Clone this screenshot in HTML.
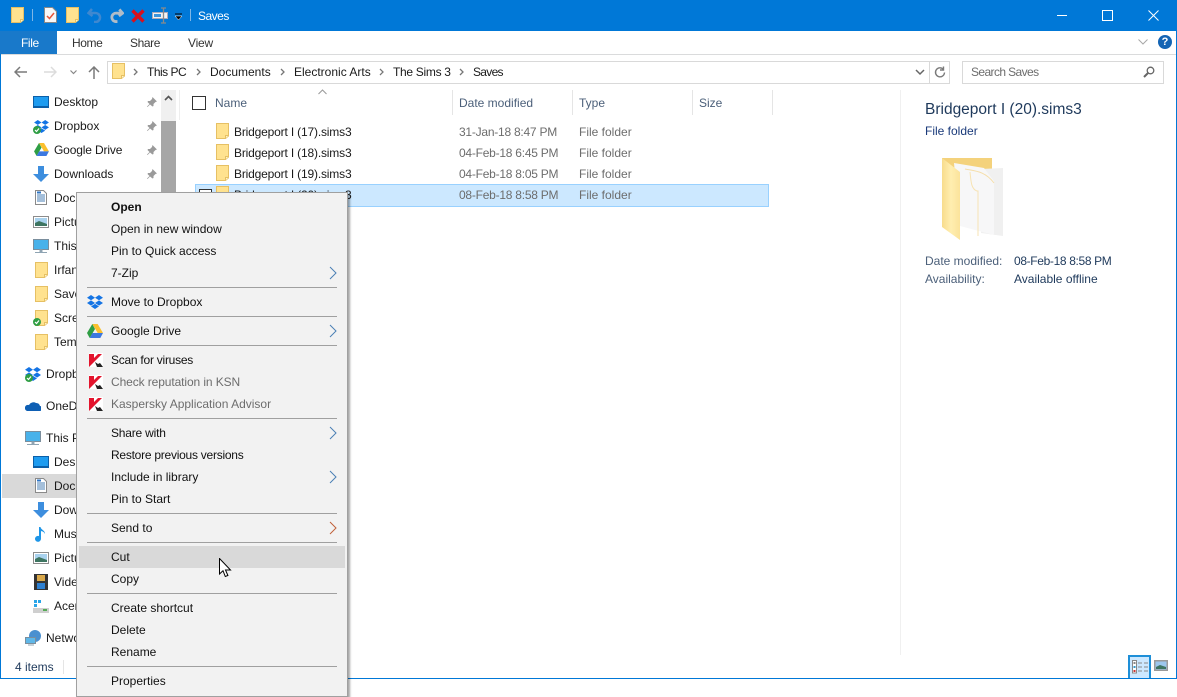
<!DOCTYPE html>
<html><head><meta charset="utf-8"><style>
html,body{margin:0;padding:0;background:#fff}
#w{position:relative;width:1177px;height:697px;overflow:hidden;background:#fff;font:12px/16px "Liberation Sans",sans-serif;color:#1a1a1a}
#w div,#w svg{position:absolute}
.t{white-space:nowrap;height:16px}
.m{color:#111;left:111px}
.g{color:#6d6d6d}
.h{color:#4c607a}
.s{left:87px;width:250px;height:1px;background:#a0a0a0}
.l{width:1px;background:#e5e5e5}
.n{left:54px}.n2{left:46px}
.fn{letter-spacing:-.17px}
.dt{letter-spacing:-.24px}
.tb{letter-spacing:-.4px}
</style></head><body><div id="w">
<svg width="0" height="0" style="left:0;top:0"><defs>
<symbol id="f" viewBox="0 0 13 16"><path d="M.5.500h12v12.500l-3 2.500H.500z" fill="#ffe28f" stroke="#e6c064"/><path d="M9.500 15.500v-3h3" fill="#fff4c8" stroke="#e6c064"/></symbol>
<symbol id="db" viewBox="0 0 16 14"><path d="M4 0 0 2.700l4 2.600L8 2.700zM12 0 8 2.700l4 2.600 4-2.600zM0 8l4 2.600L8 8 4 5.400zM16 8l-4 2.600L8 8l4-2.600zM4 11.400 8 14l4-2.600L8 8.900z" fill="#1474e4"/></symbol>
<symbol id="gd" viewBox="0 0 16 14"><path d="M5.300 0h5.400L16 9h-5.300z" fill="#fbc02d"/><path d="M5.300 0 0 9l2.700 5L8 5z" fill="#2f9e44"/><path d="M2.700 14h10.600L16 9H5.400z" fill="#3c78e0"/></symbol>
<symbol id="ok" viewBox="0 0 8 8"><circle cx="4" cy="4" r="4" fill="#2f9e44"/><path d="M2 4l1.500 1.500L6 2.500" stroke="#fff" fill="none" stroke-width="1.200"/></symbol>
<symbol id="dl" viewBox="0 0 16 16"><path d="M5 0h6v8h5l-8 8-8-8h5z" fill="#3d8ede"/></symbol>
<symbol id="doc" viewBox="0 0 12 15"><path d="M.5.500h8l3 3v11H.500z" fill="#fff" stroke="#8a8a8a"/><path d="M2 5h8M2 7h8M2 9h8M2 11h8" stroke="#4a7fb5"/><path d="M2 2.500h4" stroke="#2e75c5" stroke-width="2"/></symbol>
<symbol id="pic" viewBox="0 0 16 12"><rect x=".5" y=".5" width="15" height="11" fill="#fff" stroke="#8c8c8c"/><rect x="2" y="2" width="12" height="8" fill="#a9d2ee"/><path d="M2 7l4-2 8 3v2H2z" fill="#3e7561"/></symbol>
<symbol id="pc" viewBox="0 0 16 15"><rect x=".5" y=".5" width="15" height="10" fill="#49b2ea" stroke="#7a8e9d"/><path d="M7 11h2v2H7zM2 13.500h12" stroke="#8fa4b3" fill="#8fa4b3"/></symbol>
<symbol id="dt" viewBox="0 0 16 12"><rect x=".5" y=".5" width="15" height="11" fill="#1e9cf0" stroke="#0b5fa8"/><path d="M1 10.500h14" stroke="#0b5fa8"/></symbol>
<symbol id="pin" viewBox="0 0 10 10"><path d="M5.500 0l4.500 4.500-1.500.5-2 2 0 2-1 .5L3 7.500.5 10 0 9.500 2.500 7 .5 5l.5-1h2l2-2z" fill="#9a9a9a"/></symbol>
<symbol id="k" viewBox="0 0 14 14"><rect width="14" height="14" fill="#fff"/><path d="M0 1h5v4l4-4h4L7 7 0 14z" fill="#e3142d"/><path d="M6 9l3 2 2-1 3 4H8z" fill="#222"/></symbol>
<symbol id="arr" viewBox="0 0 8 14"><path d="M1 1l6 6-6 6" fill="none" stroke="#4a7fb5" stroke-width="1"/></symbol>
<symbol id="ch" viewBox="0 0 5 8"><path d="M1 1l3 3-3 3" fill="none" stroke="#777" stroke-width="1.300"/></symbol>
</defs></svg>

<!-- title bar -->
<div style="left:0;top:0;width:1177px;height:31px;background:#0078d7"></div>
<div style="left:0;top:0;width:1px;height:679px;background:#0078d7"></div>
<div style="left:1176px;top:0;width:1px;height:679px;background:#0078d7"></div>
<div style="left:0;top:678px;width:1177px;height:1px;background:#0078d7"></div>
<svg style="left:11px;top:7px" width="13" height="16"><use href="#f"/></svg>
<div style="left:32px;top:9px;width:1px;height:12px;background:#7fb6e6"></div>
<svg style="left:44px;top:7px" width="13" height="16" viewBox="0 0 13 16"><path d="M.5.500h8l4 4v11H.500z" fill="#f8f8f8" stroke="#8a8a8a"/><path d="M3 9l2.500 2.500L10 6" fill="none" stroke="#e8553a" stroke-width="1.500"/></svg>
<svg style="left:66px;top:7px" width="13" height="16"><use href="#f"/></svg>
<svg style="left:87px;top:8px" width="15" height="15" viewBox="0 0 15 15"><path d="M5 1 1.500 5 5.500 8M2 5h6a4.500 4.500 0 0 1 1 9H7" fill="none" stroke="#3f88cf" stroke-width="2.500"/></svg>
<svg style="left:110px;top:8px" width="14" height="15" viewBox="0 0 15 15"><path d="M10 1l3.500 4L9.500 8M13 5H7a4.500 4.500 0 0 0-1 9h2" fill="none" stroke="#b0bcc8" stroke-width="3"/></svg>
<svg style="left:131px;top:9px" width="14" height="14" viewBox="0 0 14 14"><path d="M1.500 1.500l11 11M12.500 1.500l-11 11" stroke="#d8101e" stroke-width="3.400"/></svg>
<svg style="left:152px;top:7px" width="17" height="17" viewBox="0 0 17 17"><rect x=".5" y="5.500" width="15" height="6" fill="#f2f2f2" stroke="#aab"/><rect x="2" y="7" width="7" height="3" fill="#3c94dc"/><path d="M11.500 1v15M9 1h5M9 16h5" stroke="#8a8a8a" stroke-width="1.300" fill="none"/></svg>
<svg style="left:174px;top:13px" width="9" height="9" viewBox="0 0 9 9"><path d="M1 1h7" stroke="#000"/><path d="M1 3h7L4.500 7z" fill="#000" stroke="#fff" stroke-width=".5"/></svg>
<div style="left:190px;top:9px;width:1px;height:12px;background:#7fb6e6"></div>
<div class="t" style="left:198px;top:8px;color:#fff;letter-spacing:-.5px">Saves</div>
<div style="left:1057px;top:15px;width:10px;height:1px;background:#fff"></div>
<div style="left:1102px;top:10px;width:9px;height:9px;border:1px solid #fff"></div>
<svg style="left:1148px;top:10px" width="11" height="11"><path d="M.5.500l10 10M10.500.500l-10 10" stroke="#fff"/></svg>

<!-- ribbon -->
<div style="left:1px;top:54px;width:1175px;height:1px;background:#dadbdc"></div>
<div style="left:0;top:31px;width:57px;height:23px;background:#1979ca"></div>
<div class="t tb" style="left:21px;top:35px;color:#fff;width:30px">File</div>
<div class="t tb" style="left:72px;top:35px;color:#333">Home</div>
<div class="t tb" style="left:130px;top:35px;color:#333">Share</div>
<div class="t" style="left:188px;top:35px;color:#333;letter-spacing:-.2px">View</div>
<svg style="left:1138px;top:39px" width="10" height="6"><path d="M.5.500l4.500 4.500 4.500-4.500" fill="none" stroke="#a8a8a8"/></svg>
<div style="left:1158px;top:35px;width:14px;height:14px;border-radius:50%;background:#1464b4;color:#fff;font:bold 11px/14px 'Liberation Sans',sans-serif;text-align:center">?</div>

<!-- nav buttons -->
<svg style="left:14px;top:66px" width="13" height="12" viewBox="0 0 13 12"><path d="M6 1 1 6l5 5M1 6h12" fill="none" stroke="#7a7a7a" stroke-width="1.500"/></svg>
<svg style="left:44px;top:66px" width="13" height="12" viewBox="0 0 13 12"><path d="M7 1l5 5-5 5M12 6H0" fill="none" stroke="#dcdcdc" stroke-width="1.500"/></svg>
<svg style="left:70px;top:70px" width="7" height="5"><path d="M.5.500l3 3 3-3" fill="none" stroke="#888" stroke-width="1.200"/></svg>
<svg style="left:88px;top:66px" width="12" height="13" viewBox="0 0 12 13"><path d="M1 6l5-5 5 5M6 1v12" fill="none" stroke="#7a7a7a" stroke-width="1.500"/></svg>

<!-- address -->
<div style="left:107px;top:61px;width:841px;height:21px;border:1px solid #d9d9d9"></div>
<div style="left:929px;top:62px;width:1px;height:21px;background:#d9d9d9"></div>
<svg style="left:112px;top:63px" width="13" height="16"><use href="#f"/></svg>
<svg style="left:133px;top:68px" width="5" height="8"><use href="#ch"/></svg><div class="t" style="left:147px;top:64px;letter-spacing:-.5px">This PC</div>
<svg style="left:196px;top:68px" width="5" height="8"><use href="#ch"/></svg><div class="t" style="left:210px;top:64px">Documents</div>
<svg style="left:280px;top:68px" width="5" height="8"><use href="#ch"/></svg><div class="t" style="left:294px;top:64px">Electronic Arts</div>
<svg style="left:379px;top:68px" width="5" height="8"><use href="#ch"/></svg><div class="t" style="left:393px;top:64px;letter-spacing:-.3px">The Sims 3</div>
<svg style="left:459px;top:68px" width="5" height="8"><use href="#ch"/></svg><div class="t" style="left:473px;top:64px;letter-spacing:-.7px">Saves</div>
<svg style="left:915px;top:69px" width="10" height="7"><path d="M1 1l4 4 4-4" fill="none" stroke="#666" stroke-width="1.500"/></svg>
<svg style="left:933px;top:66px" width="13" height="13" viewBox="0 0 13 13"><path d="M10.500 3.500a4.500 4.500 0 1 0 1 3M10.500 .5v3.500H7" fill="none" stroke="#7a7a7a" stroke-width="1.400"/></svg>
<div style="left:962px;top:61px;width:200px;height:21px;border:1px solid #d9d9d9"></div>
<div class="t g" style="left:971px;top:64px;letter-spacing:-.6px">Search Saves</div>
<svg style="left:1143px;top:66px" width="12" height="12" viewBox="0 0 12 12"><circle cx="7.500" cy="4.500" r="3.300" fill="none" stroke="#666" stroke-width="1.300"/><path d="M5 7l-4 4" stroke="#666" stroke-width="2"/></svg>

<!-- nav pane -->
<div style="left:161px;top:90px;width:15px;height:120px;background:#f0f0f0"></div>
<div style="left:161px;top:121px;width:15px;height:90px;background:#a6a6a6"></div>
<svg style="left:164px;top:95px" width="9" height="6"><path d="M1 5l3.500-3.500L8 5" fill="none" stroke="#555" stroke-width="1.600"/></svg>
<div style="left:179px;top:90px;width:1px;height:30px;background:#eee"></div>
<svg style="left:33px;top:96px" width="16" height="12"><use href="#dt"/></svg><div class="t n" style="top:94px">Desktop</div>
<svg style="left:34px;top:120px" width="15" height="13"><use href="#db"/></svg><svg style="left:33px;top:126px" width="8" height="8"><use href="#ok"/></svg><div class="t n" style="top:118px">Dropbox</div>
<svg style="left:34px;top:143px" width="15" height="13"><use href="#gd"/></svg><div class="t n" style="top:142px;letter-spacing:-.15px">Google Drive</div>
<svg style="left:33px;top:166px" width="16" height="16"><use href="#dl"/></svg><div class="t n" style="top:166px">Downloads</div>
<svg style="left:147px;top:97px" width="10" height="10"><use href="#pin"/></svg>
<svg style="left:147px;top:121px" width="10" height="10"><use href="#pin"/></svg>
<svg style="left:147px;top:145px" width="10" height="10"><use href="#pin"/></svg>
<svg style="left:147px;top:169px" width="10" height="10"><use href="#pin"/></svg>
<svg style="left:35px;top:190px" width="12" height="15"><use href="#doc"/></svg><div class="t n" style="top:190px">Documents</div>
<svg style="left:33px;top:216px" width="16" height="12"><use href="#pic"/></svg><div class="t n" style="top:214px">Pictures</div>
<svg style="left:33px;top:239px" width="16" height="15"><use href="#pc"/></svg><div class="t n" style="top:238px">This PC</div>
<svg style="left:35px;top:262px" width="13" height="16"><use href="#f"/></svg><div class="t n" style="top:262px">Irfan</div>
<svg style="left:35px;top:286px" width="13" height="16"><use href="#f"/></svg><div class="t n" style="top:286px">Saves</div>
<svg style="left:35px;top:310px" width="13" height="16"><use href="#f"/></svg><svg style="left:33px;top:318px" width="8" height="8"><use href="#ok"/></svg><div class="t n" style="top:310px">Screenshots</div>
<svg style="left:35px;top:334px" width="13" height="16"><use href="#f"/></svg><div class="t n" style="top:334px">Temp</div>
<svg style="left:25px;top:367px" width="16" height="14"><use href="#db"/></svg><svg style="left:25px;top:374px" width="8" height="8"><use href="#ok"/></svg><div class="t n2" style="top:366px">Dropbox</div>
<svg style="left:25px;top:401px" width="16" height="10" viewBox="0 0 16 10"><path d="M2 10h13a2.500 2.500 0 0 0 0-5 4 4 0 0 0-4-3A5 5 0 0 0 4 4a3 3 0 0 0-2 6z" fill="#0e5fb4"/></svg><div class="t n2" style="top:398px">OneDrive</div>
<svg style="left:25px;top:431px" width="16" height="15"><use href="#pc"/></svg><div class="t n2" style="top:430px">This PC</div>
<svg style="left:33px;top:456px" width="16" height="12"><use href="#dt"/></svg><div class="t n" style="top:454px">Desktop</div>
<div style="left:2px;top:474px;width:74px;height:24px;background:#d9d9d9"></div>
<svg style="left:35px;top:478px" width="12" height="15"><use href="#doc"/></svg><div class="t n" style="top:478px">Documents</div>
<svg style="left:33px;top:502px" width="16" height="16"><use href="#dl"/></svg><div class="t n" style="top:502px">Downloads</div>
<svg style="left:35px;top:526px" width="12" height="16" viewBox="0 0 12 16"><path d="M4 1h1.500c.5 3 4.500 3 4.500 7-1-2-2-2.500-4-3v8a3 3 0 1 1-2-3z" fill="#1e96e8"/></svg><div class="t n" style="top:526px">Music</div>
<svg style="left:33px;top:552px" width="16" height="12"><use href="#pic"/></svg><div class="t n" style="top:550px">Pictures</div>
<svg style="left:34px;top:574px" width="14" height="16" viewBox="0 0 14 16"><rect width="14" height="16" fill="#333"/><rect x="3" y="1" width="8" height="6" fill="#d9a84a"/><rect x="3" y="9" width="8" height="6" fill="#2d7fd0"/></svg><div class="t n" style="top:574px">Videos</div>
<svg style="left:33px;top:600px" width="16" height="13" viewBox="0 0 16 13"><rect x="1" y="0" width="3" height="3" fill="#2ba5e8"/><rect x="5" y="0" width="3" height="3" fill="#2ba5e8"/><rect x="1" y="4" width="3" height="3" fill="#2ba5e8"/><rect x="0" y="8" width="16" height="5" fill="#cfcfcf"/><rect x="10" y="9" width="4" height="2" fill="#5a5"/></svg><div class="t n" style="top:598px">Acer</div>
<svg style="left:25px;top:630px" width="16" height="16" viewBox="0 0 16 16"><circle cx="10" cy="6" r="6" fill="#4a90d0"/><rect x=".5" y="7.500" width="10" height="6" fill="#5fb7e8" stroke="#7a8e9d"/><path d="M3 15h6" stroke="#8fa4b3"/></svg><div class="t n2" style="top:630px">Network</div>

<!-- list header -->
<div style="left:192px;top:96px;width:12px;height:12px;border:1px solid #333"></div>
<svg style="left:318px;top:89px" width="9" height="6"><path d="M.5 5 4.500 1l4 4" fill="none" stroke="#999"/></svg>
<div class="t h" style="left:215px;top:95px">Name</div>
<div class="t h" style="left:459px;top:95px">Date modified</div>
<div class="t h" style="left:579px;top:95px">Type</div>
<div class="t h" style="left:699px;top:95px">Size</div>
<div class="l" style="left:452px;top:90px;height:25px"></div>
<div class="l" style="left:572px;top:90px;height:25px"></div>
<div class="l" style="left:692px;top:90px;height:25px"></div>
<div class="l" style="left:772px;top:90px;height:25px"></div>

<!-- rows -->
<svg style="left:216px;top:123px" width="13" height="16"><use href="#f"/></svg><div class="t fn" style="left:234px;top:124px">Bridgeport I (17).sims3</div><div class="t g dt" style="left:459px;top:124px">31-Jan-18 8:47 PM</div><div class="t g" style="left:579px;top:124px">File folder</div>
<svg style="left:216px;top:144px" width="13" height="16"><use href="#f"/></svg><div class="t fn" style="left:234px;top:145px">Bridgeport I (18).sims3</div><div class="t g dt" style="left:459px;top:145px">04-Feb-18 6:45 PM</div><div class="t g" style="left:579px;top:145px">File folder</div>
<svg style="left:216px;top:165px" width="13" height="16"><use href="#f"/></svg><div class="t fn" style="left:234px;top:166px">Bridgeport I (19).sims3</div><div class="t g dt" style="left:459px;top:166px">04-Feb-18 8:05 PM</div><div class="t g" style="left:579px;top:166px">File folder</div>
<div style="left:195px;top:184px;width:572px;height:21px;background:#cce8ff;border:1px solid #99d1ff"></div>
<div style="left:199px;top:189px;width:11px;height:11px;border:1px solid #333;background:#fff"></div>
<svg style="left:216px;top:186px" width="13" height="16"><use href="#f"/></svg><div class="t fn" style="left:234px;top:187px">Bridgeport I (20).sims3</div><div class="t g dt" style="left:459px;top:187px">08-Feb-18 8:58 PM</div><div class="t g" style="left:579px;top:187px">File folder</div>

<!-- preview -->
<div style="left:900px;top:90px;width:1px;height:565px;background:#f0f0f0"></div>
<div class="t" style="left:925px;top:101px;font-size:15.500px;line-height:18px;height:18px;color:#1e395b">Bridgeport I (20).sims3</div>
<div class="t" style="left:925px;top:123px;color:#1a3a7a">File folder</div>
<svg style="left:941px;top:157px" width="70" height="88" viewBox="0 0 70 88">
<defs><linearGradient id="y" x1="0" x2="1" y1="0" y2="0"><stop offset="0" stop-color="#f8dc8c"/><stop offset=".5" stop-color="#ffeeb0"/><stop offset="1" stop-color="#fbe39b"/></linearGradient></defs>
<path d="M1 1h50v30H1z" fill="#f4d27c"/>
<path d="M40 12l22-1v68l-22-3z" fill="#f0f0f0"/>
<path d="M13 6l30 5 10 13v54l-34-9z" fill="#f7f7f8"/>
<path d="M24 12c10 2 20 2 29 14" fill="none" stroke="#f5deaa"/>
<path d="M29 15c1 9 1 17 7 19h1v45" fill="none" stroke="#f7e3b3"/>
<path d="M1 1l18 14v68L1 70z" fill="url(#y)"/>
</svg>
<div class="t h" style="left:925px;top:253px">Date modified:</div><div class="t" style="left:1014px;top:253px;color:#1e395b;letter-spacing:-.35px">08-Feb-18 8:58 PM</div>
<div class="t h" style="left:925px;top:271px">Availability:</div><div class="t" style="left:1014px;top:271px;color:#1e395b">Available offline</div>

<!-- status -->
<div class="t" style="left:15px;top:659px;color:#1e395b">4 items</div>
<div style="left:63px;top:660px;width:1px;height:14px;background:#e5e5e5"></div>
<div style="left:1128px;top:655px;width:19px;height:21px;background:#cce8ff;border:2px solid #1e8fd8;border-bottom:0"></div>
<svg style="left:1132px;top:660px" width="16" height="14" viewBox="0 0 16 14"><rect x=".5" y=".5" width="4" height="12.500" fill="#fff" stroke="#888"/><path d="M1.500 2h2v2h-2z" fill="#888"/><path d="M1.500 6h2v2h-2z" fill="#39c"/><path d="M1.500 10h2v2h-2z" fill="#c33"/><path d="M6 3h4M12 3h4M6 7h4M12 7h4M6 11h4M12 11h4" stroke="#888"/></svg>
<svg style="left:1154px;top:660px" width="14" height="11"><rect x=".75" y=".75" width="12.500" height="9.500" fill="#9cc7ee" stroke="#9a9a9a" stroke-width="1.500"/><path d="M2 7l4-2 6 2v2H2z" fill="#3e7561"/></svg>

<!-- context menu -->
<div style="left:76px;top:192px;width:270px;height:503px;background:#f2f2f2;border:1px solid #a0a0a0;box-shadow:2px 2px 2px rgba(0,0,0,.35)"></div>
<div class="t m" style="top:199px;font-weight:bold">Open</div>
<div class="t m" style="top:221px">Open in new window</div>
<div class="t m" style="top:243px">Pin to Quick access</div>
<div class="t m" style="top:265px">7-Zip</div>
<svg style="left:329px;top:266px" width="8" height="14"><use href="#arr"/></svg>
<div class="s" style="top:287px"></div>
<svg style="left:87px;top:295px" width="16" height="14"><use href="#db"/></svg>
<div class="t m" style="top:294px">Move to Dropbox</div>
<div class="s" style="top:316px"></div>
<svg style="left:87px;top:324px" width="16" height="14"><use href="#gd"/></svg>
<div class="t m" style="top:323px">Google Drive</div>
<svg style="left:329px;top:324px" width="8" height="14"><use href="#arr"/></svg>
<div class="s" style="top:345px"></div>
<svg style="left:89px;top:353px" width="14" height="14"><use href="#k"/></svg>
<div class="t m" style="top:352px;letter-spacing:-.25px">Scan for viruses</div>
<svg style="left:89px;top:375px" width="14" height="14"><use href="#k"/></svg>
<div class="t m" style="top:374px;color:#6d6d6d;letter-spacing:-.1px">Check reputation in KSN</div>
<svg style="left:89px;top:397px" width="14" height="14"><use href="#k"/></svg>
<div class="t m" style="top:396px;color:#6d6d6d">Kaspersky Application Advisor</div>
<div class="s" style="top:418px"></div>
<div class="t m" style="top:425px;letter-spacing:-.2px">Share with</div>
<svg style="left:329px;top:426px" width="8" height="14"><use href="#arr"/></svg>
<div class="t m" style="top:447px;letter-spacing:-.25px">Restore previous versions</div>
<div class="t m" style="top:469px">Include in library</div>
<svg style="left:329px;top:470px" width="8" height="14"><use href="#arr"/></svg>
<div class="t m" style="top:491px">Pin to Start</div>
<div class="s" style="top:513px"></div>
<div class="t m" style="top:520px">Send to</div>
<svg style="left:329px;top:521px" width="8" height="14" viewBox="0 0 8 14"><path d="M1 1l6 6-6 6" fill="none" stroke="#c0603a"/></svg>
<div class="s" style="top:542px"></div>
<div style="left:79px;top:546px;width:266px;height:22px;background:#d9d9d9"></div>
<div class="t m" style="top:549px">Cut</div>
<div class="t m" style="top:571px">Copy</div>
<div class="s" style="top:593px"></div>
<div class="t m" style="top:600px">Create shortcut</div>
<div class="t m" style="top:622px">Delete</div>
<div class="t m" style="top:644px">Rename</div>
<div class="s" style="top:666px"></div>
<div class="t m" style="top:673px">Properties</div>
<svg style="left:219px;top:558px" width="13" height="20" viewBox="0 0 13 20"><path d="M.5.500v15.500l3.500-3.300 2.300 5.800 2.600-1-2.400-5.500h5z" fill="#fff" stroke="#000"/></svg>
</div></body></html>
